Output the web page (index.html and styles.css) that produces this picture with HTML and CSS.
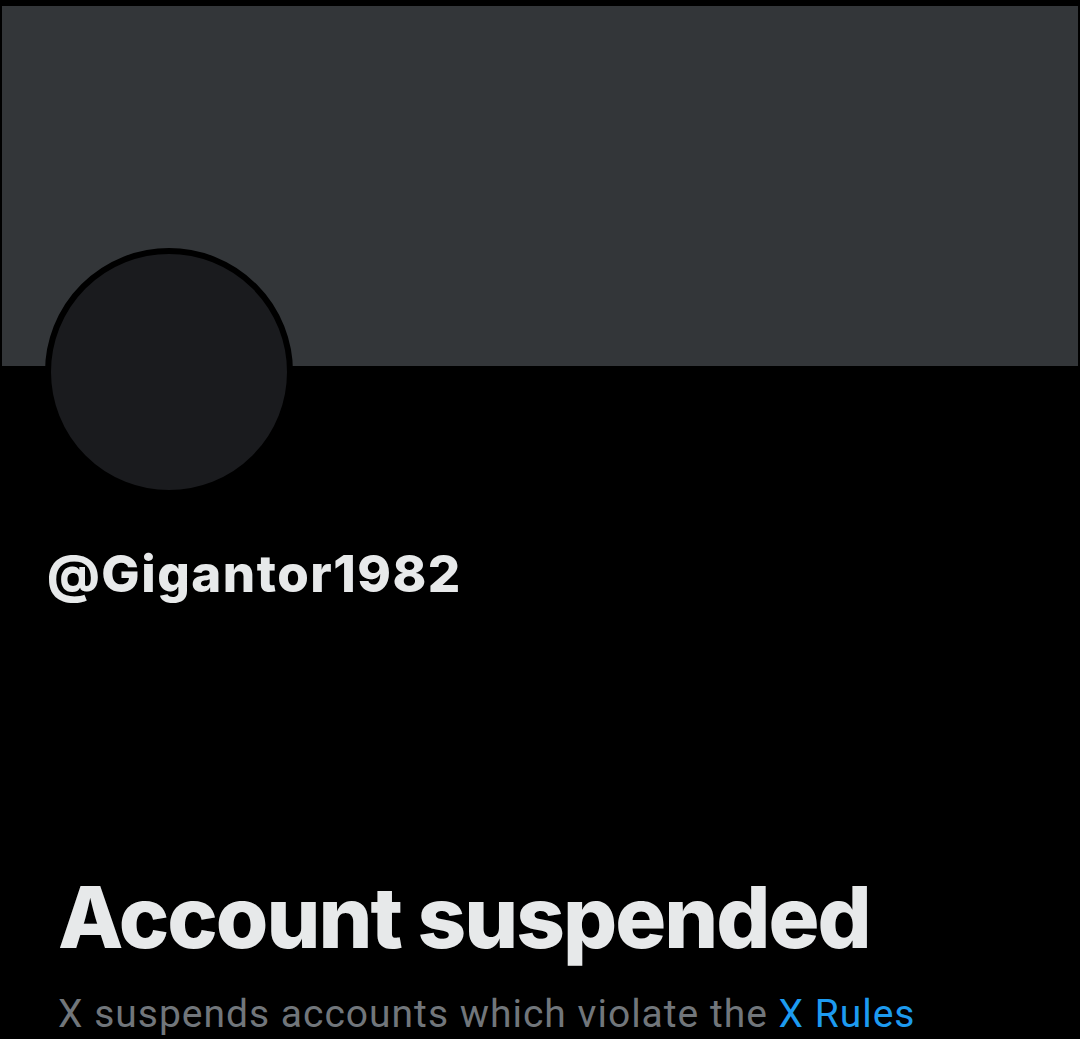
FILE: index.html
```html
<!DOCTYPE html>
<html lang="en">
<head>
<meta charset="utf-8">
<title>Account suspended</title>
<link rel="stylesheet" href="styles.css">
</head>
<body>
<main class="profile">
  <div class="banner"></div>
  <div class="avatar"><div class="avatar-inner"></div></div>
  <div class="handle">@Gigantor1982</div>
  <section class="notice">
    <h1 class="notice-title">Account suspended</h1>
    <p class="notice-text">X suspends accounts which violate the <a class="rules-link" href="#">X Rules</a></p>
  </section>
</main>
</body>
</html>
```
FILE: styles.css
```css
html, body {
  margin: 0;
  padding: 0;
  background: #000;
  height: 1039px;
  overflow: hidden;
}
.profile {
  padding: 6px 2px 0 2px;
  font-family: "Inter", "Roboto", sans-serif;
}
.banner {
  height: 360px;
  background: #333639;
}
.avatar {
  width: 236px;
  height: 236px;
  border: 6px solid #000;
  border-radius: 50%;
  margin: -118px 0 0 43px;
  background: #1a1b1e;
  box-sizing: content-box;
}
.handle {
  margin: 48px 0 0 45px;
  color: #e7e9ea;
  font-family: "Inter", sans-serif;
  font-weight: 800;
  font-size: 51px;
  line-height: 60px;
  letter-spacing: 1.5px;
}
.notice {
  margin: 264px 0 0 56px;
}
.notice-title {
  margin: 0;
  color: #e7e9ea;
  font-family: "Inter", sans-serif;
  font-weight: 800;
  font-size: 85px;
  line-height: 100px;
  letter-spacing: -2px;
}
.notice-text {
  margin: 22px 0 0 0;
  color: #71767b;
  font-family: "Roboto", sans-serif;
  font-weight: 400;
  font-size: 39px;
  line-height: 48px;
  letter-spacing: 1px;
}
.rules-link {
  color: #1d9bf0;
  text-decoration: none;
}
```
